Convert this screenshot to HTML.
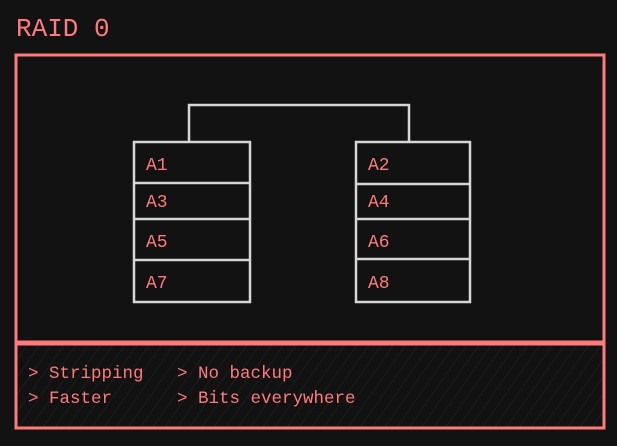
<!DOCTYPE html>
<html><head><style>
html,body{margin:0;padding:0;background:#121212;width:617px;height:446px;overflow:hidden}
</style></head><body>
<svg width="617" height="446" xmlns="http://www.w3.org/2000/svg" style="position:absolute;left:0;top:0">
<defs><pattern id="h" width="10" height="10" patternUnits="userSpaceOnUse" patternTransform="rotate(35)"><line x1="0" y1="0" x2="0" y2="10" stroke="#2a2424" stroke-width="1"/></pattern></defs>
<rect x="0" y="0" width="617" height="446" fill="#121212"/>
<text x="16" y="36" font-family="Liberation Mono, monospace" font-size="26" fill="#ff7b7b">RAID 0</text>
<rect x="16" y="55" width="588" height="287" fill="none" stroke="#ff7b7b" stroke-width="3"/>
<rect x="16" y="344" width="588" height="84" fill="url(#h)" stroke="#ff7b7b" stroke-width="3"/>
<g font-family="Liberation Mono, monospace" font-size="17.5" fill="#ff7b7b">
<text x="28" y="378">&gt; Stripping</text>
<text x="177" y="378">&gt; No backup</text>
<text x="28" y="403">&gt; Faster</text>
<text x="177" y="403">&gt; Bits everywhere</text>
</g>
<g fill="none" stroke="#d6d6d6" stroke-width="2.5">
<path d="M189 141 V105 H409 V141"/>
<rect x="134" y="142" width="116" height="160"/>
<path d="M134 183 H250 M134 219 H250 M134 260 H250"/>
<rect x="356" y="142" width="114" height="160"/>
<path d="M356 184 H470 M356 219 H470 M355 259 H470"/>
</g>
<g font-family="Liberation Mono, monospace" font-size="18" fill="#ff7b7b">
<text x="146" y="170">A1</text><text x="146" y="207">A3</text><text x="146" y="247">A5</text><text x="146" y="288">A7</text>
<text x="368" y="170">A2</text><text x="368" y="207">A4</text><text x="368" y="247">A6</text><text x="368" y="288">A8</text>
</g>
</svg>
</body></html>
